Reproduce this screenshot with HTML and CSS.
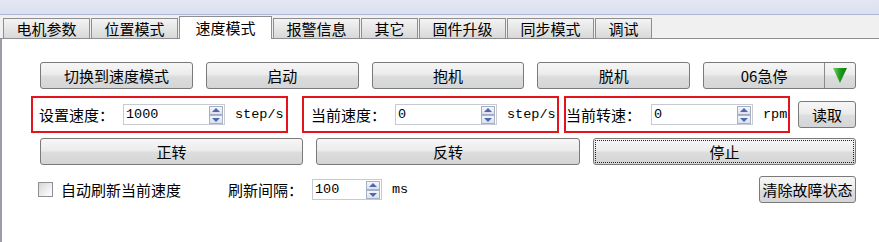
FILE: index.html
```html
<!DOCTYPE html>
<html lang="zh-CN">
<head>
<meta charset="UTF-8">
<meta name="viewport" content="width=device-width, initial-scale=1.0">
<title>速度模式</title>
<link rel="stylesheet" href="styles.css">
</head>
<body>

<div class="caption"></div>

<div class="tabbar">
  <div class="tab">电机参数</div>
  <div class="tab">位置模式</div>
  <div class="tab active">速度模式</div>
  <div class="tab">报警信息</div>
  <div class="tab">其它</div>
  <div class="tab">固件升级</div>
  <div class="tab">同步模式</div>
  <div class="tab">调试</div>
</div>

<div class="panel">
  <div class="row row-actions">
    <button class="btn btn-action">切换到速度模式</button>
    <button class="btn btn-action">启动</button>
    <button class="btn btn-action">抱机</button>
    <button class="btn btn-action">脱机</button>
    <div class="combo">
      <div class="combo-value">06急停</div>
      <div class="combo-arrow"><span class="green-tri"></span></div>
    </div>
  </div>

  <div class="row row-speed">
    <div class="group group-set">
      <span class="label">设置速度：</span>
      <div class="spin">
        <span class="spin-value">1000</span>
        <span class="spin-arrows"><i class="spin-up"></i><i class="spin-down"></i></span>
      </div>
      <span class="unit">step/s</span>
    </div>
    <div class="group group-cur">
      <span class="label">当前速度：</span>
      <div class="spin">
        <span class="spin-value">0</span>
        <span class="spin-arrows"><i class="spin-up"></i><i class="spin-down"></i></span>
      </div>
      <span class="unit">step/s</span>
    </div>
    <div class="group group-rpm">
      <span class="label">当前转速：</span>
      <div class="spin">
        <span class="spin-value">0</span>
        <span class="spin-arrows"><i class="spin-up"></i><i class="spin-down"></i></span>
      </div>
      <span class="unit">rpm</span>
    </div>
    <button class="btn btn-read">读取</button>
  </div>

  <div class="row row-dir">
    <button class="btn btn-dir">正转</button>
    <button class="btn btn-dir btn-wide">反转</button>
    <button class="btn btn-dir btn-focus">停止</button>
  </div>

  <div class="row row-auto">
    <span class="check"></span>
    <span class="check-label">自动刷新当前速度</span>
    <span class="label label-interval">刷新间隔：</span>
    <div class="spin spin-small">
      <span class="spin-value">100</span>
      <span class="spin-arrows"><i class="spin-up"></i><i class="spin-down"></i></span>
    </div>
    <span class="unit">ms</span>
    <button class="btn btn-clear">清除故障状态</button>
  </div>
</div>

</body>
</html>
```

FILE: styles.css
```css
body {
  margin: 0;
  padding: 0;
  width: 879px;
  height: 242px;
  overflow: hidden;
  background-color: #fff;
  font-family: "Noto Sans CJK SC", "Liberation Sans", sans-serif;
  font-size: 15px;
  color: #000;
}
.caption {
  height: 14px;
  background: linear-gradient(#e4e7f2, #dadff0);
  border-bottom: 1px solid #b0b6cf;
}
.tabbar {
  display: flex;
  align-items: flex-end;
  gap: 1px;
  height: 23px;
  padding-left: 3px;
  background-color: #f0f0f0;
  border-bottom: 1px solid #8c8e94;
}
.tab {
  height: 19px;
  line-height: 19px;
  padding: 0 12.5px;
  border: 1px solid #8c8e94;
  border-bottom: none;
  background: linear-gradient(#f4f4f4, #e6e6e6 50%, #d8d8d8);
  white-space: nowrap;
}
.tab.active {
  height: 22px;
  line-height: 21px;
  padding: 0 15.5px;
  margin-bottom: -1px;
  background: #fff;
  position: relative;
}
.panel {
  height: 203px;
  box-sizing: border-box;
  border-left: 2px solid #9b9ea6;
  padding: 23px 23px 0 29px;
}
.row {
  display: flex;
  align-items: center;
}
.btn {
  box-sizing: border-box;
  height: 27px;
  padding: 0;
  border: 1px solid #7a7a7a;
  border-radius: 3px;
  background: linear-gradient(#f6f6f6, #ececec 45%, #dcdcdc 55%, #d3d5d7);
  font-family: inherit;
  font-size: 15px;
  color: #000;
  line-height: 25px;
}
.row-actions {
  gap: 13px;
  padding-left: 9px;
}
.btn-action {
  width: 153px;
}
.combo {
  box-sizing: border-box;
  display: flex;
  width: 153px;
  height: 27px;
  border: 1px solid #7a7a7a;
  border-radius: 3px;
  background: linear-gradient(#f6f6f6, #ececec 45%, #dcdcdc 55%, #d3d5d7);
}
.combo-value {
  flex: 1;
  text-align: center;
  line-height: 25px;
  border-right: 1px solid #8a8a8a;
}
.combo-arrow {
  width: 30px;
  display: flex;
  justify-content: center;
  align-items: center;
}
.green-tri {
  width: 14px;
  height: 15px;
  background: linear-gradient(90deg, #7ccf63, #1f9a1f 50%, #137a13);
  clip-path: polygon(0 0, 100% 0, 50% 100%);
}
.row-speed {
  margin-top: 7px;
}
.group {
  box-sizing: border-box;
  display: flex;
  align-items: center;
  height: 37px;
  border: 2px solid #e3141c;
}
.group-set {
  width: 257px;
  padding-left: 6px;
}
.group-cur {
  width: 257px;
  padding-left: 7px;
  margin-left: 14px;
}
.group-rpm {
  width: 226px;
  padding-left: 0;
  margin-left: 5px;
}
.label {
  width: 84px;
  white-space: nowrap;
}
.group-rpm .label {
  width: 85px;
}
.spin {
  box-sizing: border-box;
  display: flex;
  align-items: center;
  justify-content: space-between;
  width: 102px;
  height: 21px;
  border: 1px solid #c6cbd3;
  background: #fff;
  padding: 0 1px 0 2px;
}
.spin-value, .unit {
  font-family: "Liberation Mono", monospace;
  font-size: 13.5px;
}
.unit {
  margin-left: 10px;
}
.spin-arrows {
  display: flex;
  flex-direction: column;
}
.spin-arrows i {
  box-sizing: border-box;
  width: 14px;
  height: 9px;
  border: 1px solid #a7b1c4;
  background: linear-gradient(#f4f6fb, #dae1ee);
  position: relative;
}
.spin-arrows i::after {
  content: "";
  position: absolute;
  left: 2px;
  width: 0;
  height: 0;
  border-left: 4px solid transparent;
  border-right: 4px solid transparent;
}
.spin-up::after {
  top: 1px;
  border-bottom: 4px solid #4c68b4;
}
.spin-down::after {
  top: 2px;
  border-top: 4px solid #4c68b4;
}
.btn-read {
  width: 58px;
  margin-left: 8px;
}
.row-dir {
  margin-top: 5px;
  gap: 13px;
  padding-left: 9px;
}
.btn-dir {
  width: 263px;
}
.btn-wide {
  width: 264px;
}
.btn-focus {
  outline: 1px dotted #222;
  outline-offset: -3px;
}
.row-auto {
  margin-top: 11px;
  padding-left: 7px;
}
.check {
  box-sizing: border-box;
  width: 15px;
  height: 15px;
  border: 1px solid #8e8f8f;
  background: linear-gradient(135deg, #d6d6d6, #f4f4f4 70%, #fff);
}
.check-label {
  margin-left: 8px;
}
.label-interval {
  margin-left: 47px;
}
.spin-small {
  width: 70px;
}
.btn-clear {
  width: 97px;
  margin-left: auto;
}
```
